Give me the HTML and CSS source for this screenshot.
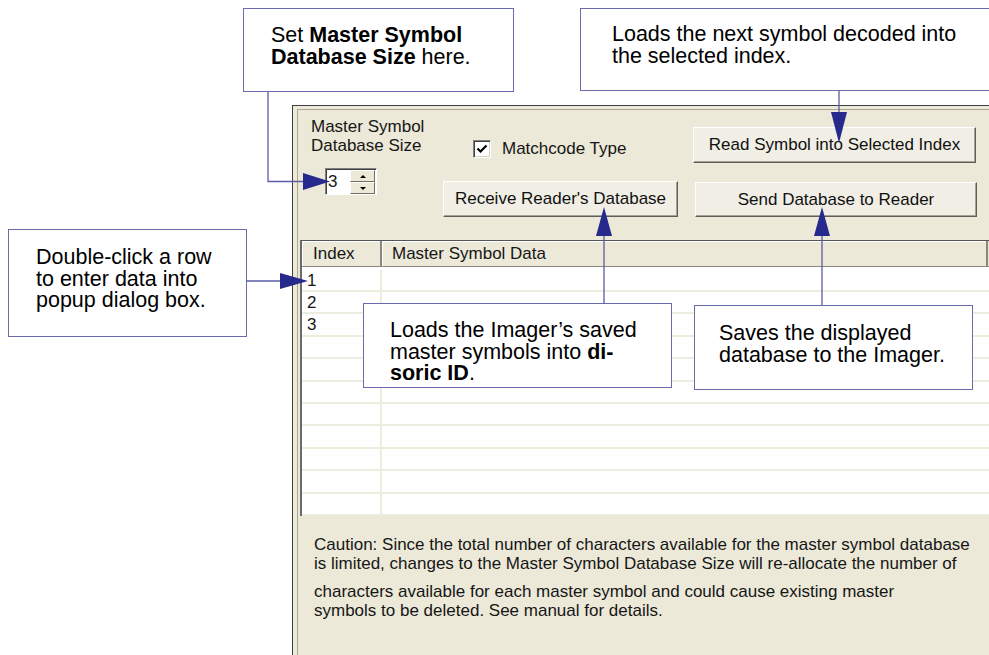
FILE: index.html
```html
<!DOCTYPE html>
<html lang="en">
<head>
  <meta charset="UTF-8">
  <title>Master Symbol Database</title>
  <link rel="stylesheet" href="styles.css">
</head>
<body>
<div class="page">

  <!-- the dialog panel -->
  <div class="panel">
    <div class="frame">
      <div class="controls">
        <div class="col col-size">
          <div class="size-label">Master Symbol<br>Database Size</div>
          <div class="spinner">
            <span class="spin-value">3</span>
            <span class="spin-btns">
              <span class="spin-btn"><span class="tri-up"></span></span>
              <span class="spin-btn"><span class="tri-down"></span></span>
            </span>
          </div>
        </div>
        <div class="col col-mid">
          <div class="check">
            <span class="check-box">
              <svg width="12" height="12" viewBox="0 0 12 12"><polyline points="1.5,5.5 4.5,8.5 10.5,2.5" fill="none" stroke="#000" stroke-width="2.2"/></svg>
            </span>
            <span>Matchcode Type</span>
          </div>
          <div class="btn btn-receive">Receive Reader's Database</div>
        </div>
        <div class="col col-right">
          <div class="btn btn-read">Read Symbol into Selected Index</div>
          <div class="btn btn-send">Send Database to Reader</div>
        </div>
      </div>

      <div class="grid">
        <div class="grid-head">
          <div class="hcell idx">Index</div>
          <div class="hcell data">Master Symbol Data</div>
        </div>
        <div class="grid-row first"><div class="cell idx">1</div><div class="cell data"></div></div>
        <div class="grid-row"><div class="cell idx">2</div><div class="cell data"></div></div>
        <div class="grid-row"><div class="cell idx">3</div><div class="cell data"></div></div>
        <div class="grid-row"><div class="cell idx"></div><div class="cell data"></div></div>
        <div class="grid-row"><div class="cell idx"></div><div class="cell data"></div></div>
        <div class="grid-row"><div class="cell idx"></div><div class="cell data"></div></div>
        <div class="grid-row"><div class="cell idx"></div><div class="cell data"></div></div>
        <div class="grid-row"><div class="cell idx"></div><div class="cell data"></div></div>
        <div class="grid-row"><div class="cell idx"></div><div class="cell data"></div></div>
        <div class="grid-row"><div class="cell idx"></div><div class="cell data"></div></div>
        <div class="grid-row"><div class="cell idx"></div><div class="cell data"></div></div>
      </div>

      <div class="caution">
        <p>Caution: Since the total number of characters available for the master symbol database<br>is limited, changes to the Master Symbol Database Size will re-allocate the number of</p>
        <p>characters available for each master symbol and could cause existing master<br>symbols to be deleted. See manual for details.</p>
      </div>
    </div>
  </div>

  <!-- callouts -->
  <div class="callout callout-size">Set <b>Master Symbol<br>Database Size</b> here.</div>
  <div class="callout callout-read">Loads the next symbol decoded into<br>the selected index.</div>
  <div class="callout callout-row">Double-click a row<br>to enter data into<br>popup dialog box.</div>
  <div class="callout callout-receive">Loads the Imager’s saved<br>master symbols into <b>di-</b><br><b>soric ID</b>.</div>
  <div class="callout callout-send">Saves the displayed<br>database to the Imager.</div>

  <svg class="leaders" width="989" height="655" viewBox="0 0 989 655">
    <g fill="none" stroke="#5b5ba6" stroke-width="1.3">
      <path d="M268 92 V181.5 H305"/>
      <path d="M246 281 H282"/>
      <path d="M839 91 V113"/>
      <path d="M604 304 V234"/>
      <path d="M822 305 V234"/>
    </g>
    <g fill="#262a8c">
      <polygon points="303,173 330,181.5 303,190"/>
      <polygon points="280,273 308,281 280,289"/>
      <polygon points="831,112 847,112 839,143"/>
      <polygon points="596,236 612,236 604,207"/>
      <polygon points="814,236 830,236 822,207"/>
    </g>
  </svg>

</div>
</body>
</html>
```

FILE: styles.css
```css
/* page and dialog panel */
body {
  margin: 0;
  background-color: #fff;
  font-family: "Liberation Sans", Arial, sans-serif;
}
.page {
  position: relative;
  width: 989px;
  height: 655px;
  overflow: hidden;
}
.panel {
  box-sizing: border-box;
  width: 720px;
  height: 550px;
  margin: 105px 0 0 292px;
  padding: 3px 0 0 4px;
  background-color: #ece9d8;
  border-top: 1px solid #3f3f3f;
  border-left: 1px solid #3f3f3f;
}
.frame {
  box-sizing: border-box;
  height: 100%;
  border-top: 1px solid #aca899;
  border-left: 1px solid #aca899;
  color: #161616;
  font-size: 17px;
}

/* top controls */
.controls {
  display: flex;
  box-sizing: border-box;
  height: 130px;
  padding: 7px 0 0 13px;
}
.col {
  display: flex;
  flex-direction: column;
}
.col-size {
  width: 132px;
}
.size-label {
  line-height: 19px;
}
.spinner {
  display: flex;
  width: 52px;
  height: 27px;
  margin: 13px 0 0 14px;
  box-sizing: border-box;
  border: 1px solid;
  border-color: #808080 #fff #fff #808080;
  box-shadow: inset 1px 1px #404040;
  background-color: #fff;
}
.spin-value {
  width: 24px;
  padding: 3px 0 0 2px;
  box-sizing: border-box;
  line-height: 20px;
}
.spin-btns {
  display: flex;
  flex-direction: column;
  flex: 1;
  padding: 1px 1px 0 0;
}
.spin-btn {
  display: flex;
  align-items: center;
  justify-content: center;
  flex: 1;
  background-color: #ece9d8;
  border: 1px solid;
  border-color: #fff #716f64 #716f64 #fff;
}
.tri-up {
  width: 0;
  height: 0;
  border-left: 3px solid transparent;
  border-right: 3px solid transparent;
  border-bottom: 3px solid #000;
}
.tri-down {
  width: 0;
  height: 0;
  border-left: 3px solid transparent;
  border-right: 3px solid transparent;
  border-top: 3px solid #000;
}

.col-mid {
  width: 235px;
}
.check {
  display: flex;
  align-items: center;
  gap: 11px;
  height: 18px;
  margin: 22px 0 0 30px;
  line-height: 20px;
  padding-top: 1px;
}
.check-box {
  display: flex;
  align-items: center;
  justify-content: center;
  box-sizing: border-box;
  width: 18px;
  height: 18px;
  background-color: #fff;
  border: 1px solid;
  border-color: #808080 #fff #fff #808080;
  box-shadow: inset 1px 1px #404040, inset -1px -1px #d4d0c8;
}

.btn {
  display: flex;
  align-items: center;
  justify-content: center;
  box-sizing: border-box;
  background-color: #f0eee5;
  border: 1px solid;
  border-color: #fff #5f5d55 #5f5d55 #fff;
  box-shadow: inset -1px -1px #a4a295;
  color: #111;
}
.btn-receive {
  width: 235px;
  height: 36px;
  margin-top: 23px;
}
.col-right {
  margin-left: 15px;
}
.btn-read {
  width: 283px;
  height: 36px;
  margin-top: 10px;
}
.btn-send {
  width: 282px;
  height: 35px;
  margin: 19px 0 0 2px;
}

/* list grid */
.grid {
  width: 710px;
  margin-left: 2px;
  background-color: #fff;
  border-top: 1px solid #555;
  border-left: 2px solid #6b6b6b;
}
.grid-head {
  display: flex;
  height: 25px;
  background-color: #ece9d8;
  border-bottom: 1px solid #8a887c;
}
.hcell {
  box-sizing: border-box;
  padding-left: 10px;
  line-height: 25px;
  border-right: 2px solid #8a887c;
  box-shadow: inset 1px 1px #fff;
}
.hcell.idx {
  width: 80px;
  padding-left: 11px;
}
.hcell.data {
  width: 606px;
}
.grid-row {
  display: flex;
  box-sizing: border-box;
  height: 22.4px;
  border-bottom: 2px solid #eeecdf;
}
.grid-row.first {
  height: 25px;
  padding-top: 3px;
}
.cell {
  box-sizing: border-box;
  padding-left: 5px;
  line-height: 22px;
}
.cell.idx {
  width: 80px;
  border-right: 2px solid #eeecdf;
}

/* caution text */
.caution {
  padding: 19px 0 0 16px;
  line-height: 19px;
}
.caution p {
  margin: 0;
}
.caution p + p {
  margin-top: 9px;
}

/* annotation callouts */
.callout {
  position: absolute;
  box-sizing: border-box;
  background-color: #fff;
  border: 1.5px solid #6a6aae;
  font-size: 21.5px;
  line-height: 21.5px;
  color: #000;
  z-index: 2;
}
.callout-size {
  left: 243px;
  top: 8px;
  width: 271px;
  height: 84px;
  padding: 16px 0 0 27px;
}
.callout-read {
  left: 580px;
  top: 8px;
  width: 430px;
  height: 83px;
  padding: 15px 0 0 31px;
}
.callout-row {
  left: 8px;
  top: 229px;
  width: 239px;
  height: 108px;
  padding: 17px 0 0 27px;
}
.callout-receive {
  left: 363px;
  top: 303px;
  width: 309px;
  height: 85px;
  padding: 16px 0 0 26px;
}
.callout-send {
  left: 694px;
  top: 305px;
  width: 279px;
  height: 85px;
  padding: 17px 0 0 24px;
}
.leaders {
  position: absolute;
  left: 0;
  top: 0;
  z-index: 3;
  pointer-events: none;
}
```
